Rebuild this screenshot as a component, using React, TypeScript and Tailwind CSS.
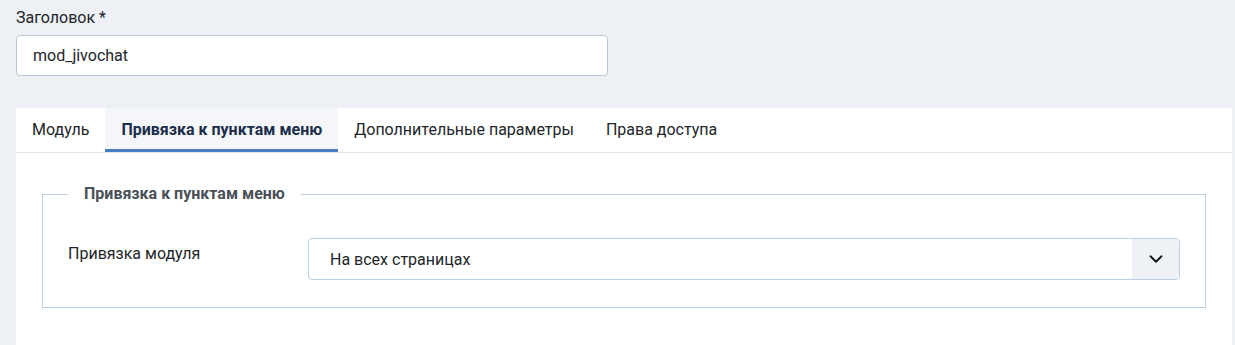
import { ChevronDown } from "lucide-react";

const tabs = [
  { label: "Модуль", active: false },
  { label: "Привязка к пунктам меню", active: true },
  { label: "Дополнительные параметры", active: false },
  { label: "Права доступа", active: false },
];

export default function App() {
  return (
    <div className="min-h-screen bg-[#edf1f5] pl-4 pr-[3px] pt-[6px] font-['Roboto',sans-serif] text-[#22262a]">
      <label className="block text-[16px] leading-6">Заголовок *</label>
      <input
        className="mt-[5px] block h-[41px] w-[592px] rounded-[4px] border border-[#b7c7d9] bg-white px-4 text-[16px] text-[#22262a] outline-none"
        defaultValue="mod_jivochat"
      />

      <div className="mt-[32px] bg-white">
        {/* Tabs */}
        <div className="flex h-[45px] border-b border-[#dbe3ec]">
          {tabs.map((tab) => (
            <div
              key={tab.label}
              className={
                tab.active
                  ? "flex items-center border-b-[3px] border-[#4a7fc1] bg-[#f4f6f9] px-4 pt-[3px] text-[16px] font-bold text-[#1c2e4a]"
                  : "flex items-center px-4 text-[16px] text-[#22262a]"
              }
            >
              {tab.label}
            </div>
          ))}
        </div>

        <div className="px-[26px] pb-[40px] pt-[29px]">
          <fieldset className="border border-[#bccfe3] pb-[27px] pl-[25px] pr-[25px]">
            <legend className="px-4 text-[16px] font-bold leading-6 text-[#495057]">
              Привязка к пунктам меню
            </legend>
            <div className="mt-[32px] flex items-start">
              <label className="w-[240px] pt-[4px] text-[16px] leading-6">Привязка модуля</label>
              <div className="flex h-[42px] flex-1 items-center overflow-hidden rounded-[4px] border border-[#bccfe3]">
                <span className="flex-1 pl-[21px] pt-[1px] text-[16px]">На всех страницах</span>
                <span className="flex h-full w-[47px] items-center justify-center bg-[#eef2f6]">
                  <ChevronDown size={22} strokeWidth={2} className="text-[#111]" />
                </span>
              </div>
            </div>
          </fieldset>
        </div>
      </div>
    </div>
  );
}
